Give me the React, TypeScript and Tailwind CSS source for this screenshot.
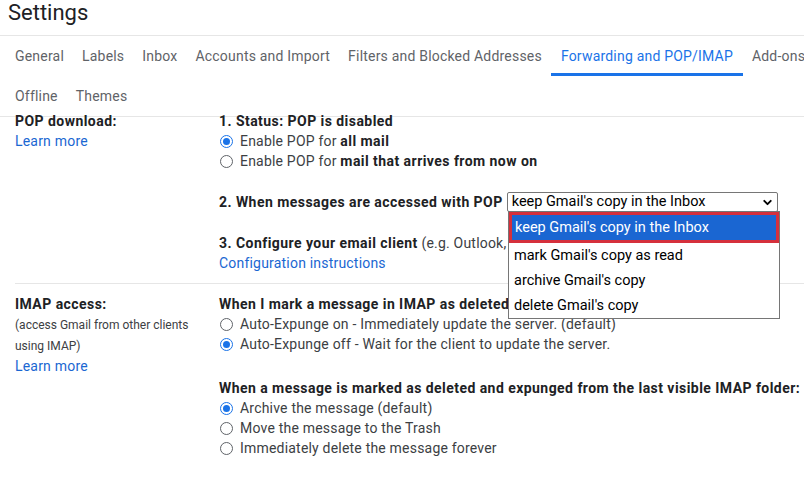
import { ChevronDown } from 'lucide-react'

const tabsRow1 = [
  'General',
  'Labels',
  'Inbox',
  'Accounts and Import',
  'Filters and Blocked Addresses',
  'Forwarding and POP/IMAP',
  'Add-ons',
]
const tabsRow2 = ['Offline', 'Themes']

const popOptions = [
  "keep Gmail's copy in the Inbox",
  "mark Gmail's copy as read",
  "archive Gmail's copy",
  "delete Gmail's copy",
]

function Radio({ checked, children }: { checked?: boolean; children: React.ReactNode }) {
  return (
    <label className="flex items-center gap-[7px] h-5 text-[#3c4043]">
      {checked ? (
        <span className="ml-[1px] w-[13px] h-[13px] rounded-full border-[1.5px] border-[#1a73e8] flex items-center justify-center">
          <span className="w-[7px] h-[7px] rounded-full bg-[#1a73e8]" />
        </span>
      ) : (
        <span className="ml-[1px] w-[13px] h-[13px] rounded-full border border-[#5f6368]" />
      )}
      <span>{children}</span>
    </label>
  )
}

function Tab({ name, active }: { name: string; active?: boolean }) {
  return (
    <div
      className={
        active
          ? 'h-full px-[10px] flex items-center border-b-[3px] border-[#1a73e8] pt-[3px] text-[#1a73e8] whitespace-nowrap'
          : 'h-full px-[9px] flex items-center text-[#5f6368] whitespace-nowrap'
      }
    >
      {name}
    </div>
  )
}

export default function App() {
  return (
    <div className="relative w-[804px] h-[483px] overflow-hidden bg-white font-['Roboto',sans-serif] text-[14px] tracking-[0.2px]">
      {/* title */}
      <div className="h-[36px] border-b border-[#e6e6e6] pl-[8px]">
        <h1 className="text-[22px] leading-[26px] text-[#202124] tracking-normal">Settings</h1>
      </div>

      {/* tabs */}
      <div className="border-b border-[#e6e6e6] pl-[6px]">
        <div className="h-[40px] flex">
          {tabsRow1.map((t) => (
            <Tab key={t} name={t} active={t === 'Forwarding and POP/IMAP'} />
          ))}
        </div>
        <div className="h-[40px] flex">
          {tabsRow2.map((t) => (
            <Tab key={t} name={t} />
          ))}
        </div>
      </div>

      {/* POP section */}
      <div className="-mt-[6px] ml-[15px] flex border-b border-[#e6e6e6] pb-[10px] leading-5">
        <div className="w-[204px] shrink-0">
          <div className="font-bold text-[#202124] tracking-[0.45px]">POP download:</div>
          <div className="text-[#1a67d2]">Learn more</div>
        </div>
        <div className="flex flex-col">
          <div className="font-bold text-[#202124] tracking-[0.45px]">1. Status: POP is disabled</div>
          <Radio checked>
            Enable POP for <b className="text-[#202124] tracking-[0.45px]">all mail</b>
          </Radio>
          <Radio>
            Enable POP for <b className="text-[#202124] tracking-[0.45px]">mail that arrives from now on</b>
          </Radio>

          <div className="mt-[21px] flex items-center h-5">
            <span className="font-bold text-[#202124] whitespace-nowrap tracking-[0.45px]">
              2. When messages are accessed with POP
            </span>
            <div className="ml-[4px] w-[271px] h-[20px] border border-[#767676] rounded-[2px] flex items-center justify-between pl-[4px] pr-[3px] text-black text-[14.5px] tracking-normal shrink-0">
              <span className="whitespace-nowrap">keep Gmail's copy in the Inbox</span>
              <ChevronDown size={13} strokeWidth={3.5} className="text-black" />
            </div>
          </div>

          <div className="mt-[21px] w-[288px] overflow-hidden whitespace-nowrap text-[#3c4043]">
            <b className="text-[#202124] tracking-[0.45px]">3. Configure your email client</b> (e.g. Outlook, Eudora,
            Netscape Mail)
          </div>
          <div className="text-[#1a67d2]">Configuration instructions</div>
        </div>
      </div>

      {/* IMAP section */}
      <div className="ml-[15px] flex pt-[10px] leading-5">
        <div className="w-[204px] shrink-0">
          <div className="font-bold text-[#202124] tracking-[0.45px]">IMAP access:</div>
          <div className="text-[12px] leading-[20.5px] text-[#3c4043] tracking-normal mt-[1px]">
            (access Gmail from other clients
          </div>
          <div className="text-[12px] leading-[20.5px] text-[#3c4043] tracking-normal">using IMAP)</div>
          <div className="text-[#1a67d2]">Learn more</div>
        </div>
        <div className="flex flex-col whitespace-nowrap">
          <div className="font-bold text-[#202124] tracking-[0.45px]">When I mark a message in IMAP as deleted:</div>
          <Radio>Auto-Expunge on - Immediately update the server. (default)</Radio>
          <Radio checked>Auto-Expunge off - Wait for the client to update the server.</Radio>

          <div className="mt-[24px] font-bold text-[#202124] tracking-[0.45px]">
            When a message is marked as deleted and expunged from the last visible IMAP folder:
          </div>
          <Radio checked>Archive the message (default)</Radio>
          <Radio>Move the message to the Trash</Radio>
          <Radio>Immediately delete the message forever</Radio>
        </div>
      </div>

      {/* open select list */}
      <div className="absolute left-[508px] top-[211px] w-[272px] bg-white border border-[#767676] text-[14.5px] tracking-normal text-black">
        {popOptions.map((o, i) =>
          i === 0 ? (
            <div
              key={o}
              className="h-[31px] flex items-center pl-[3px] bg-[#1a66d2] text-white border-[3px] border-[#d5303c]"
            >
              {o}
            </div>
          ) : (
            <div key={o} className="h-[25px] flex items-center pl-[5px]">
              {o}
            </div>
          )
        )}
      </div>
    </div>
  )
}
